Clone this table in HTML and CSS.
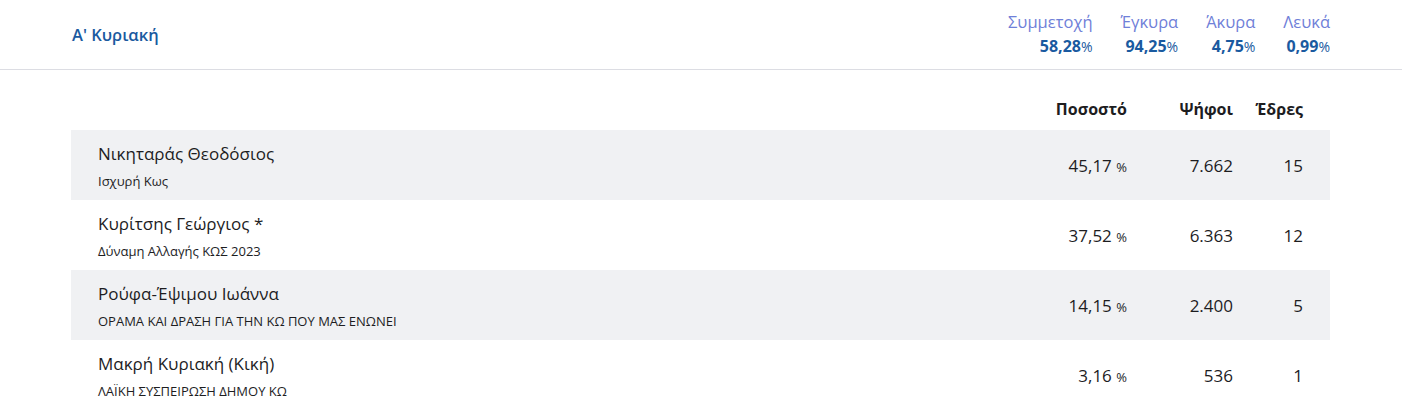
FILE: index.html
```html
<!DOCTYPE html>
<html lang="el">
<head>
  <meta charset="UTF-8">
  <title>Α' Κυριακή</title>
  <link rel="stylesheet" href="styles.css">
</head>
<body>
  <header class="top-bar">
    <h1 class="round-title">Α' Κυριακή</h1>
    <div class="stats">
      <div class="stat">
        <span class="stat-label">Συμμετοχή</span>
        <span class="stat-value">58,28<small>%</small></span>
      </div>
      <div class="stat">
        <span class="stat-label">Έγκυρα</span>
        <span class="stat-value">94,25<small>%</small></span>
      </div>
      <div class="stat">
        <span class="stat-label">Άκυρα</span>
        <span class="stat-value">4,75<small>%</small></span>
      </div>
      <div class="stat">
        <span class="stat-label">Λευκά</span>
        <span class="stat-value">0,99<small>%</small></span>
      </div>
    </div>
  </header>

  <div class="results">
    <div class="results-head">
      <span class="col-name"></span>
      <span class="col-pct">Ποσοστό</span>
      <span class="col-votes">Ψήφοι</span>
      <span class="col-seats">Έδρες</span>
    </div>

    <div class="result-row">
      <div class="col-name">
        <div class="candidate">Νικηταράς Θεοδόσιος</div>
        <div class="party">Ισχυρή Κως</div>
      </div>
      <div class="col-pct">45,17 <small>%</small></div>
      <div class="col-votes">7.662</div>
      <div class="col-seats">15</div>
    </div>

    <div class="result-row">
      <div class="col-name">
        <div class="candidate">Κυρίτσης Γεώργιος *</div>
        <div class="party">Δύναμη Αλλαγής ΚΩΣ 2023</div>
      </div>
      <div class="col-pct">37,52 <small>%</small></div>
      <div class="col-votes">6.363</div>
      <div class="col-seats">12</div>
    </div>

    <div class="result-row">
      <div class="col-name">
        <div class="candidate">Ρούφα-Έψιμου Ιωάννα</div>
        <div class="party">ΟΡΑΜΑ ΚΑΙ ΔΡΑΣΗ ΓΙΑ ΤΗΝ ΚΩ ΠΟΥ ΜΑΣ ΕΝΩΝΕΙ</div>
      </div>
      <div class="col-pct">14,15 <small>%</small></div>
      <div class="col-votes">2.400</div>
      <div class="col-seats">5</div>
    </div>

    <div class="result-row">
      <div class="col-name">
        <div class="candidate">Μακρή Κυριακή (Κική)</div>
        <div class="party">ΛΑΪΚΗ ΣΥΣΠΕΙΡΩΣΗ ΔΗΜΟΥ ΚΩ</div>
      </div>
      <div class="col-pct">3,16 <small>%</small></div>
      <div class="col-votes">536</div>
      <div class="col-seats">1</div>
    </div>
  </div>
</body>
</html>
```

FILE: styles.css
```css
body {
  margin: 0;
  font-family: "Open Sans", "Noto Sans", sans-serif;
  color: #1d1d1f;
  background: #fff;
}

.top-bar {
  display: flex;
  align-items: center;
  justify-content: space-between;
  height: 69px;
  padding: 0 72px;
  border-bottom: 1px solid #dcdde3;
}
.round-title {
  margin: 0;
  font-size: 16.5px;
  font-weight: 600;
  color: #1a5aa0;
}
.stats {
  display: flex;
  gap: 28px;
}
.stat {
  display: flex;
  flex-direction: column;
  align-items: flex-end;
  line-height: 24px;
}
.stat-label {
  font-size: 16.5px;
  color: #6f80d8;
}
.stat-value {
  font-size: 16px;
  font-weight: 700;
  color: #1a5aa0;
}
.stat-value small {
  font-size: 14px;
  font-weight: 400;
}

.results {
  margin: 18px 72px 0 71px;
}
.results-head,
.result-row {
  display: grid;
  grid-template-columns: 1fr 120px 106px 97px;
  align-items: center;
}
.results-head {
  height: 42px;
  font-size: 16px;
  font-weight: 700;
  text-align: right;
}
.results-head .col-seats {
  padding-right: 27px;
}
.result-row {
  height: 70px;
  font-size: 17px;
}
.result-row:nth-child(even) {
  background: #f0f1f3;
}
.result-row .col-name {
  padding-left: 27px;
  align-self: start;
  padding-top: 12px;
}
.candidate {
  font-size: 17px;
  line-height: 24px;
}
.party {
  font-size: 13px;
  line-height: 18px;
  margin-top: 6px;
}
.col-pct,
.col-votes,
.col-seats {
  text-align: right;
}
.result-row .col-seats {
  padding-right: 27px;
}
.col-pct small {
  font-size: 13px;
}
```
